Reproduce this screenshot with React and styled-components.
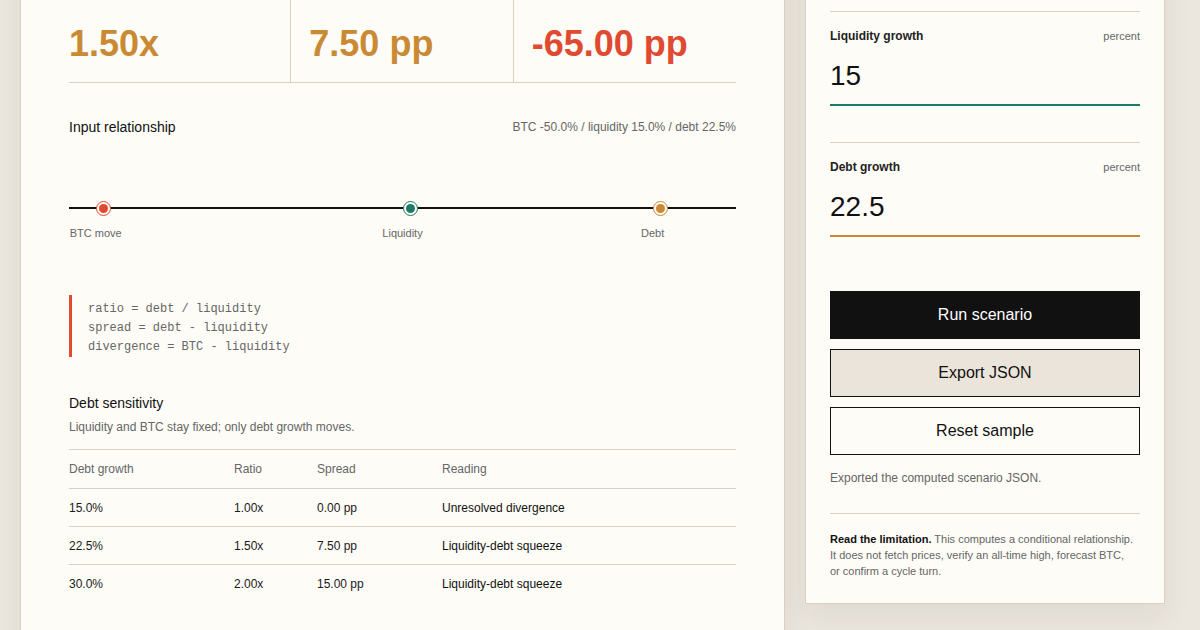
import React, { useLayoutEffect, useRef, useState } from 'react'
import styled, { createGlobalStyle } from 'styled-components'

const GlobalStyle = createGlobalStyle`
  html { overflow-y: scroll; scroll-behavior: auto; }
  body {
    margin: 0;
    background: #ebe6de;
    color: #111;
    font-family: 'Liberation Sans', Arial, sans-serif;
  }
  *, *::before, *::after { box-sizing: border-box; }
`

const colors = {
  line: '#d9d1c4',
  paper: '#fdfcf7',
  muted: '#666',
  gold: '#c98a33',
  red: '#df4a30',
  teal: '#1d7a67',
}

const Page = styled.div`
  padding: 20px;
`

const Masthead = styled.header`
  padding: 24px 0 60px;
`

const TopBar = styled.div`
  display: flex;
  justify-content: space-between;
  align-items: center;
  padding-bottom: 18px;
  border-bottom: 1px solid ${colors.line};
  font-size: 13px;
  color: ${colors.muted};

  strong { color: #111; font-size: 15px; }
`

const Kicker = styled.div`
  margin: 90px 0 14px;
  font-size: 12px;
  letter-spacing: 0.12em;
  text-transform: uppercase;
  color: ${colors.muted};
`

const Headline = styled.h1`
  margin: 0 0 22px;
  max-width: 820px;
  font-size: 56px;
  line-height: 62px;
  font-weight: 700;
`

const Lede = styled.p`
  margin: 0;
  max-width: 640px;
  font-size: 17px;
  line-height: 28px;
  color: #444;
`

const Layout = styled.main`
  display: grid;
  grid-template-columns: 765px 360px;
  gap: 20px;
  align-items: start;
`

const Panel = styled.section`
  background: ${colors.paper};
  border: 1px solid ${colors.line};
  box-shadow: 0 12px 28px rgba(70, 55, 35, 0.07);
  padding: ${p => p.$pad};
`

const PanelKicker = styled.div`
  font-size: 12px;
  line-height: 16px;
  margin-bottom: 10px;
  color: ${colors.muted};
  text-transform: uppercase;
  letter-spacing: 0.1em;
`

const PanelTitle = styled.h2`
  margin: 0 0 12px;
  font-size: 30px;
  line-height: 36px;
  font-weight: 700;
`

const PanelLede = styled.p`
  margin: 0 0 4px;
  font-size: 13px;
  line-height: 20px;
  color: ${colors.muted};
  white-space: nowrap;
`

const Metrics = styled.div`
  display: grid;
  grid-template-columns: repeat(3, 1fr);
  border-bottom: 1px solid ${colors.line};
`

const Metric = styled.div`
  padding: 0 18px 16px;
  border-right: 1px solid ${colors.line};

  &:first-child { padding-left: 0; }
  &:last-child { border-right: none; }
`

const MetricLabel = styled.div`
  font-size: 12px;
  line-height: 16px;
  margin-bottom: 40px;
  color: ${colors.muted};
`

const MetricValue = styled.div`
  font-size: 36px;
  line-height: 44px;
  font-weight: 700;
  color: ${p => p.$tone};
  white-space: nowrap;
`

const SectionHead = styled.div`
  display: flex;
  justify-content: space-between;
  align-items: center;
  margin-top: ${p => p.$top};
`

const SectionTitle = styled.h3`
  margin: 0;
  font-size: 14px;
  line-height: 20px;
  font-weight: 500;
  color: #111;
`

const SectionNote = styled.span`
  font-size: 12px;
  line-height: 18px;
  color: ${colors.muted};
`

const Track = styled.div`
  position: relative;
  height: 2px;
  margin-top: 70px;
  background: #111;
`

const Marker = styled.span`
  position: absolute;
  top: -6.5px;
  width: 15px;
  height: 15px;
  border-radius: 50%;
  border: 1.5px solid ${p => p.$tone};
  background: ${colors.paper};
  display: flex;
  align-items: center;
  justify-content: center;

  &::after {
    content: '';
    width: 9px;
    height: 9px;
    border-radius: 50%;
    background: ${p => p.$tone};
  }
`

const TrackLabels = styled.div`
  position: relative;
  height: 14px;
  margin-top: 17px;
`

const TrackLabel = styled.span`
  position: absolute;
  top: 0;
  transform: translateX(-50%);
  font-size: 11px;
  line-height: 14px;
  color: ${colors.muted};
  white-space: nowrap;
`

const Formula = styled.pre`
  margin: 55px 0 0;
  padding: 5px 0 0 16px;
  border-left: 3px solid ${colors.red};
  font-family: 'Liberation Mono', 'Courier New', monospace;
  font-size: 12px;
  line-height: 19px;
  color: ${colors.muted};
`

const SubNote = styled.p`
  margin: 5px 0 0;
  font-size: 12px;
  line-height: 18px;
  color: ${colors.muted};
`

const Table = styled.div`
  margin-top: 13px;
  border-top: 1px solid ${colors.line};
`

const Row = styled.div`
  display: grid;
  grid-template-columns: 165px 83px 125px 1fr;
  align-items: center;
  height: 38px;
  border-top: ${p => (p.$head ? 'none' : `1px solid ${colors.line}`)};
  font-size: 12px;
  color: ${p => (p.$head ? colors.muted : '#1a1a1a')};

  & > span:last-child { color: ${p => (p.$head ? colors.muted : '#111')}; }
`

const FootNote = styled.p`
  margin: 28px 0 0;
  font-size: 12px;
  line-height: 18px;
  color: ${colors.muted};
`

const InputsTitle = styled.h2`
  margin: 0 0 14px;
  font-size: 16px;
  line-height: 22px;
  font-weight: 700;
`

const Field = styled.label`
  display: block;
  border-top: 1px solid ${colors.line};
  padding: 17px 0 36px;
`

const FieldHead = styled.div`
  display: flex;
  justify-content: space-between;
  align-items: center;
  height: 14px;
  margin-bottom: 11px;
`

const FieldName = styled.span`
  font-size: 12px;
  font-weight: 700;
  color: #222;
`

const FieldUnit = styled.span`
  font-size: 11px;
  color: ${colors.muted};
`

const NumberInput = styled.input`
  display: block;
  width: 100%;
  height: 52px;
  padding: 6px 0 12px;
  border: none;
  border-bottom: 2px solid ${p => p.$tone};
  background: transparent;
  font-family: inherit;
  font-size: 28px;
  color: #111;
  outline: none;
`

const Actions = styled.div`
  display: flex;
  flex-direction: column;
  gap: 10px;
  margin-top: 18px;
`

const Button = styled.button`
  height: 48px;
  border: 1px solid #111;
  background: ${p => (p.$variant === 'primary' ? '#111' : p.$variant === 'soft' ? '#ebe4da' : colors.paper)};
  color: ${p => (p.$variant === 'primary' ? '#fff' : '#111')};
  font-family: inherit;
  font-size: 16px;
  cursor: pointer;
`

const Status = styled.p`
  margin: 14px 0 0;
  font-size: 12px;
  line-height: 18px;
  color: ${colors.muted};
`

const Limitation = styled.p`
  margin: 26px 0 0;
  padding: 17px 6px 0 0;
  border-top: 1px solid ${colors.line};
  font-size: 11px;
  line-height: 16px;
  color: ${colors.muted};

  b { color: #111; }
`

const Footer = styled.footer`
  padding: 36px 0 40px;
  font-size: 12px;
  color: ${colors.muted};
`

const pct = v => `${v.toFixed(1)}%`
const pp = v => `${v.toFixed(2)} pp`
const clamp = v => Math.max(4, Math.min(96, v))

export default function App() {
  const [btc, setBtc] = useState('-50')
  const [liq, setLiq] = useState('15')
  const [debt, setDebt] = useState('22.5')
  const metricsRef = useRef(null)

  const b = parseFloat(btc) || 0
  const l = parseFloat(liq) || 0
  const d = parseFloat(debt) || 0
  const ratio = l ? d / l : 0
  const spread = d - l
  const divergence = b - l

  useLayoutEffect(() => {
    const jump = () => {
      const el = metricsRef.current
      if (!el) return
      const bottom = el.getBoundingClientRect().bottom + window.scrollY
      window.scrollTo(0, bottom - 83)
    }
    jump()
    if (document.fonts) document.fonts.ready.then(jump)
  }, [])

  const points = [
    { name: 'BTC move', tone: colors.red, at: clamp(50 + (b - l) * 5) },
    { name: 'Liquidity', tone: colors.teal, at: 50 },
    { name: 'Debt', tone: colors.gold, at: clamp(50 + (d - l) * 5) },
  ]

  const rows = [1, 1.5, 2].map(k => {
    const dg = l * k
    return {
      growth: pct(dg),
      ratio: `${(l ? dg / l : 0).toFixed(2)}x`,
      spread: pp(dg - l),
      reading: dg > l ? 'Liquidity-debt squeeze' : 'Unresolved divergence',
    }
  })

  return (
    <>
      <GlobalStyle />
      <Page>
        <Masthead>
          <TopBar>
            <strong>Cycle Desk</strong>
            <span>Scenario notes</span>
          </TopBar>
          <Kicker>Liquidity and credit</Kicker>
          <Headline>When debt grows faster than liquidity</Headline>
          <Lede>
            Set a BTC move, a liquidity growth rate and a debt growth rate. The calculator
            returns the debt-to-liquidity ratio, the spread between them and how far BTC has
            drifted from liquidity.
          </Lede>
        </Masthead>

        <Layout>
          <Panel $pad="48px">
            <PanelKicker>Scenario output</PanelKicker>
            <PanelTitle>Computed relationship</PanelTitle>
            <PanelLede>Ratio, spread and divergence for the current inputs.</PanelLede>

            <Metrics ref={metricsRef}>
              <Metric>
                <MetricLabel>Debt / liquidity</MetricLabel>
                <MetricValue $tone={colors.gold}>{ratio.toFixed(2)}x</MetricValue>
              </Metric>
              <Metric>
                <MetricLabel>Debt spread</MetricLabel>
                <MetricValue $tone={colors.gold}>{pp(spread)}</MetricValue>
              </Metric>
              <Metric>
                <MetricLabel>BTC divergence</MetricLabel>
                <MetricValue $tone={divergence < 0 ? colors.red : colors.teal}>{pp(divergence)}</MetricValue>
              </Metric>
            </Metrics>

            <SectionHead $top="34px">
              <SectionTitle>Input relationship</SectionTitle>
              <SectionNote>
                BTC {pct(b)} / liquidity {pct(l)} / debt {pct(d)}
              </SectionNote>
            </SectionHead>

            <Track>
              {points.map(p => (
                <Marker key={p.name} $tone={p.tone} style={{ left: `${p.at}%` }} />
              ))}
            </Track>
            <TrackLabels>
              {points.map(p => (
                <TrackLabel key={p.name} style={{ left: `${p.at}%` }}>{p.name}</TrackLabel>
              ))}
            </TrackLabels>

            <Formula>
              {'ratio = debt / liquidity\nspread = debt - liquidity\ndivergence = BTC - liquidity'}
            </Formula>

            <SectionHead $top="36px">
              <SectionTitle>Debt sensitivity</SectionTitle>
            </SectionHead>
            <SubNote>Liquidity and BTC stay fixed; only debt growth moves.</SubNote>

            <Table>
              <Row $head>
                <span>Debt growth</span>
                <span>Ratio</span>
                <span>Spread</span>
                <span>Reading</span>
              </Row>
              {rows.map(r => (
                <Row key={r.growth}>
                  <span>{r.growth}</span>
                  <span>{r.ratio}</span>
                  <span>{r.spread}</span>
                  <span>{r.reading}</span>
                </Row>
              ))}
            </Table>

            <FootNote>
              A ratio above 1.00x means debt is compounding faster than the liquidity that
              services it. The table holds the other inputs constant.
            </FootNote>
          </Panel>

          <Panel $pad="24px">
            <InputsTitle>Scenario inputs</InputsTitle>

            <Field>
              <FieldHead>
                <FieldName>BTC move</FieldName>
                <FieldUnit>percent</FieldUnit>
              </FieldHead>
              <NumberInput $tone={colors.red} value={btc} onChange={e => setBtc(e.target.value)} />
            </Field>
            <Field>
              <FieldHead>
                <FieldName>Liquidity growth</FieldName>
                <FieldUnit>percent</FieldUnit>
              </FieldHead>
              <NumberInput $tone={colors.teal} value={liq} onChange={e => setLiq(e.target.value)} />
            </Field>
            <Field>
              <FieldHead>
                <FieldName>Debt growth</FieldName>
                <FieldUnit>percent</FieldUnit>
              </FieldHead>
              <NumberInput $tone={colors.gold} value={debt} onChange={e => setDebt(e.target.value)} />
            </Field>

            <Actions>
              <Button $variant="primary">Run scenario</Button>
              <Button $variant="soft">Export JSON</Button>
              <Button>Reset sample</Button>
            </Actions>

            <Status>Exported the computed scenario JSON.</Status>

            <Limitation>
              <b>Read the limitation.</b> This computes a conditional relationship. It does
              not fetch prices, verify an all-time high, forecast BTC, or confirm a cycle turn.
            </Limitation>
          </Panel>
        </Layout>

        <Footer>Figures are illustrative inputs, not market data.</Footer>
      </Page>
    </>
  )
}
